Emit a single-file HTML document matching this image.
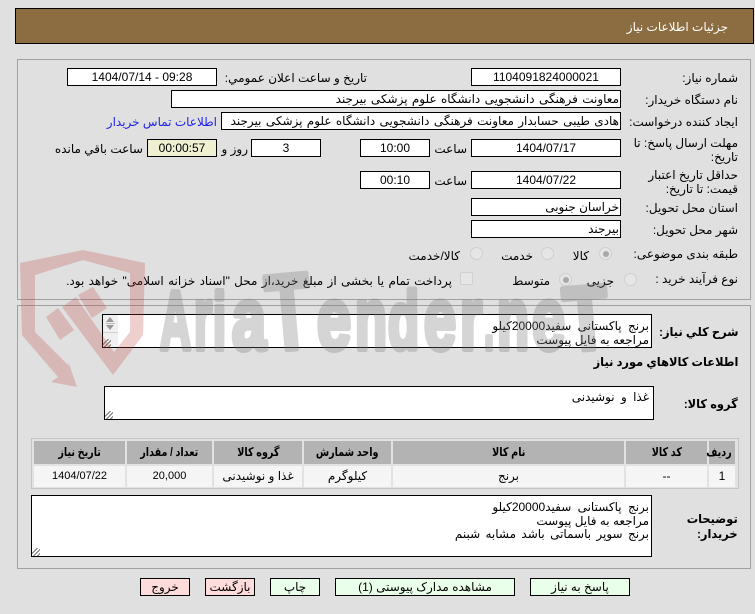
<!DOCTYPE html>
<html lang="fa" dir="rtl">
<head>
<meta charset="utf-8">
<title>جزئیات اطلاعات نیاز</title>
<style>
html,body{margin:0;padding:0;background:#e0e0e0;}
#p{position:relative;width:755px;height:614px;overflow:hidden;background:#e0e0e0;font-family:"Liberation Sans","DejaVu Sans",sans-serif;font-size:12px;color:#000;}
#p div{position:absolute;box-sizing:border-box;white-space:nowrap;}
.l{line-height:16px;height:16px;}
.b{font-weight:bold;transform:scaleX(.95);transform-origin:100% 50%;}
.f{background:#fff;border:1px solid #000;line-height:16px;height:18px;text-align:center;overflow:hidden;}
.r{text-align:right;padding-right:1px;}
.ta{background:#fff;border:1px solid #000;overflow:hidden;text-align:right;line-height:13.5px;padding:1px 2px 0 0;}
.rd{width:13px;height:13px;border-radius:50%;background:#e6e6e6;border:1px solid #cfcfcf;}
.rd.on:after{content:"";position:absolute;left:2.5px;top:2.5px;width:6px;height:6px;border-radius:50%;background:#a8a8a8;}
.th{background:#b3b3b3;font-weight:bold;text-align:center;line-height:23px;height:23px;top:441px;}
.th span{display:inline-block;transform:scaleX(.8);}
.td{background:#f5f5f5;text-align:center;line-height:21px;height:21px;top:466px;}
.n{font-size:11px;}
.btn{top:578px;height:18px;border:1px solid #000;text-align:center;line-height:16px;}
.g{background:#eaffea;}
.k{background:#ffdcdc;}
.rz{width:8px;height:8px;background:linear-gradient(135deg,transparent 0 30%,#777 30% 38%,transparent 38% 55%,#777 55% 63%,transparent 63% 80%,#777 80% 88%,transparent 88%);}
.w1{word-spacing:1px;}.w2{word-spacing:2px;}.w3{word-spacing:3px;}
</style>
</head>
<body>
<div id="p">
<div style="left:15px;top:8px;width:739px;height:36px;background:#8c6d42;border:1px solid #000;"></div>
<div class="l" style="right:27px;top:19px;color:#fff;">جزئیات اطلاعات نیاز</div>

<div style="left:17px;top:59px;width:734px;height:241px;border:1px solid #a0a0a0;"></div>
<div style="left:17px;top:305px;width:734px;height:264px;border:1px solid #a0a0a0;"></div>

<div class="l" style="right:17px;top:70px;">شماره نیاز:</div>
<div class="f" style="left:471px;top:68px;width:150px;">1104091824000021</div>
<div class="l" style="right:388px;top:70px;">تاریخ و ساعت اعلان عمومي:</div>
<div class="f" dir="ltr" style="left:67px;top:68px;width:150px;">1404/07/14 - 09:28</div>

<div class="l" style="right:17px;top:92px;">نام دستگاه خریدار:</div>
<div class="f r w1" style="left:171px;top:90px;width:450px;">معاونت فرهنگی دانشجویی دانشگاه علوم پزشکی بیرجند</div>

<div class="l" style="right:17px;top:114px;">ایجاد کننده درخواست:</div>
<div class="f r w1" style="left:221px;top:112px;width:400px;">هادی طیبی حسابدار معاونت فرهنگی دانشجویی دانشگاه علوم پزشکی بیرجند</div>
<div class="l" style="right:538px;top:114px;color:#2222ee;">اطلاعات تماس خریدار</div>

<div class="l" style="right:17px;top:135px;">مهلت ارسال پاسخ: تا</div>
<div class="l" style="right:17px;top:149px;">تاریخ:</div>
<div class="f" style="left:471px;top:139px;width:150px;">1404/07/17</div>
<div class="l" style="right:288px;top:141px;">ساعت</div>
<div class="f" style="left:360px;top:139px;width:70px;">10:00</div>
<div class="f" style="left:251px;top:139px;width:70px;">3</div>
<div class="l" style="right:507px;top:141px;">روز و</div>
<div class="f" style="left:147px;top:139px;width:70px;background:#efefd2;">00:00:57</div>
<div class="l" style="right:612px;top:141px;">ساعت باقي مانده</div>

<div class="l" style="right:17px;top:167px;">حداقل تاریخ اعتبار</div>
<div class="l" style="right:17px;top:181px;">قیمت: تا تاریخ:</div>
<div class="f" style="left:471px;top:171px;width:150px;">1404/07/22</div>
<div class="l" style="right:288px;top:173px;">ساعت</div>
<div class="f" style="left:360px;top:171px;width:70px;">00:10</div>

<div class="l" style="right:17px;top:200px;">استان محل تحویل:</div>
<div class="f r" style="left:471px;top:198px;width:150px;">خراسان جنوبی</div>
<div class="l" style="right:17px;top:222px;">شهر محل تحویل:</div>
<div class="f r" style="left:471px;top:220px;width:150px;">بیرجند</div>

<div class="l" style="right:17px;top:246px;">طبقه بندی موضوعی:</div>
<div class="rd on" style="left:599px;top:247px;"></div>
<div class="l" style="right:166px;top:248px;">کالا</div>
<div class="rd" style="left:541px;top:247px;"></div>
<div class="l" style="right:222px;top:248px;">خدمت</div>
<div class="rd" style="left:470px;top:247px;"></div>
<div class="l" style="right:295px;top:248px;">کالا/خدمت</div>

<div class="l" style="right:17px;top:271px;">نوع فرآیند خرید :</div>
<div class="rd" style="left:624px;top:273px;"></div>
<div class="l" style="right:141px;top:273px;">جزیی</div>
<div class="rd on" style="left:559px;top:273px;"></div>
<div class="l" style="right:205px;top:273px;">متوسط</div>
<div style="left:460px;top:272px;width:13px;height:13px;background:#e6e6e6;border:1px solid #cfcfcf;border-radius:2px;"></div>
<div class="l w1" style="right:303px;top:273px;">پرداخت تمام یا بخشی از مبلغ خرید،از محل "اسناد خزانه اسلامی" خواهد بود.</div>

<div class="l b" style="right:17px;top:324px;">شرح کلي نیاز:</div>
<div class="ta" style="left:102px;top:314px;width:550px;height:34px;padding-top:5px;"><span class="w3">برنج پاکستانی سفید20000کیلو</span><br>مراجعه به فایل پیوست</div>
<div style="left:103px;top:315px;width:15px;height:32px;background:#f0f0f0;"></div>
<div style="left:103px;top:332px;width:15px;height:1px;background:#d0d0d0;"></div>
<div style="left:106px;top:317px;width:0;height:0;border-left:4.5px solid transparent;border-right:4.5px solid transparent;border-bottom:5px solid #999;"></div>
<div style="left:106px;top:323px;width:9px;height:1px;background:#bbb;"></div>
<div style="left:106px;top:325px;width:0;height:0;border-left:4.5px solid transparent;border-right:4.5px solid transparent;border-top:5px solid #999;"></div>
<div class="rz" style="left:103px;top:339px;"></div>

<div class="l b" style="right:17px;top:354px;">اطلاعات کالاهاي مورد نیاز</div>

<div class="l b" style="right:17px;top:396px;">گروه کالا:</div>
<div class="ta w3" style="left:104px;top:386px;width:550px;height:34px;padding:4px 4px 0 0;">غذا و نوشیدنی</div>
<div class="rz" style="left:105px;top:411px;"></div>

<div style="left:31px;top:438px;width:708px;height:51px;background:#e2e2e2;border:1px solid #c4c4c4;"></div>
<div class="th" style="left:34px;width:91px;"><span>تاریخ نیاز</span></div>
<div class="th" style="left:127px;width:85px;"><span>تعداد / مقدار</span></div>
<div class="th" style="left:214px;width:88px;"><span>گروه کالا</span></div>
<div class="th" style="left:304px;width:87px;"><span>واحد شمارش</span></div>
<div class="th" style="left:393px;width:231px;"><span>نام کالا</span></div>
<div class="th" style="left:626px;width:81px;"><span>کد کالا</span></div>
<div class="th" style="left:709px;width:26px;"><span>ردیف</span></div>
<div class="td n" style="left:34px;width:91px;">1404/07/22</div>
<div class="td n" style="left:127px;width:85px;">20,000</div>
<div class="td" style="left:214px;width:88px;">غذا و نوشیدنی</div>
<div class="td" style="left:304px;width:87px;">کیلوگرم</div>
<div class="td" style="left:393px;width:231px;">برنج</div>
<div class="td" style="left:626px;width:81px;">--</div>
<div class="td" style="left:709px;width:26px;">1</div>

<div class="l b" style="right:17px;top:511px;">توضیحات</div>
<div class="l b" style="right:17px;top:526px;">خریدار:</div>
<div class="ta" style="left:31px;top:495px;width:621px;height:62px;padding-top:5px;"><span class="w3">برنج پاکستانی سفید20000کیلو</span><br>مراجعه به فایل پیوست<br><span class="w2">برنج سوپر باسماتی باشد مشابه شبنم</span></div>
<div class="rz" style="left:32px;top:548px;"></div>

<div class="btn k" style="left:140px;width:50px;">خروج</div>
<div class="btn k" style="left:205px;width:50px;">بازگشت</div>
<div class="btn g" style="left:270px;width:50px;">چاپ</div>
<div class="btn g" style="left:335px;width:180px;">مشاهده مدارک پیوستی (1)</div>
<div class="btn g" style="left:530px;width:100px;">پاسخ به نیاز</div>

<svg width="755" height="614" viewBox="0 0 755 614" style="position:absolute;left:0;top:0;pointer-events:none;">
<g fill="#be3c3c" fill-opacity=".25">
<path d="M20 263L83 250L145 263L143 335L113 375L62 307L76 297L114 352L130 332L130 273L83 260L35 275L35 332L69 366L68 361L77 387L51 382L58 377L22 335Z"/>
<path d="M46 317L58 308L74 330L60 340Z"/>
<path d="M78 295L93 287L107 308L92 318Z"/>
</g>
<g opacity=".3" fill="#787878" stroke="#787878" stroke-width="6" stroke-linejoin="round" font-family="Liberation Sans" font-weight="bold" direction="ltr">
<text x="160" y="349" font-size="83" textLength="31" lengthAdjust="spacingAndGlyphs">A</text>
<text x="194" y="349" font-size="88" textLength="18" lengthAdjust="spacingAndGlyphs">r</text>
<text x="213" y="349" font-size="80" textLength="13" lengthAdjust="spacingAndGlyphs">i</text>
<text x="232" y="349" font-size="88" textLength="34" lengthAdjust="spacingAndGlyphs">a</text>
<text x="270" y="349" font-size="107" textLength="44" lengthAdjust="spacingAndGlyphs" transform="rotate(-5 290 352)">T</text>
<text x="317" y="349" font-size="88" textLength="34" lengthAdjust="spacingAndGlyphs">e</text>
<text x="355" y="349" font-size="88" textLength="32" lengthAdjust="spacingAndGlyphs">n</text>
<text x="388" y="349" font-size="82" textLength="31" lengthAdjust="spacingAndGlyphs">d</text>
<text x="424" y="349" font-size="88" textLength="32" lengthAdjust="spacingAndGlyphs">e</text>
<text x="460" y="349" font-size="88" textLength="22" lengthAdjust="spacingAndGlyphs">r</text>
<text x="484" y="349" font-size="80" textLength="10" lengthAdjust="spacingAndGlyphs">.</text>
<text x="497" y="349" font-size="88" textLength="32" lengthAdjust="spacingAndGlyphs">n</text>
<text x="532" y="349" font-size="88" textLength="33" lengthAdjust="spacingAndGlyphs">e</text>
<text x="567" y="349" font-size="90" textLength="44" lengthAdjust="spacingAndGlyphs" transform="rotate(-5 590 352)">T</text>
</g>
</svg>
</div>
</body>
</html>
